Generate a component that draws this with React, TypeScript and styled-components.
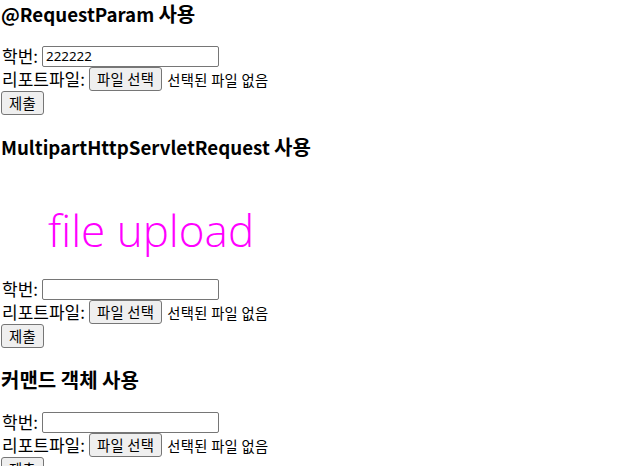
import styled, { createGlobalStyle } from "styled-components";

const GlobalStyle = createGlobalStyle`
  body {
    margin: 0;
    background: #ffffff;
    color: #000000;
    font-family: "Noto Sans CJK KR", "Noto Sans", sans-serif;
    font-size: 16px;
  }
`;

const Page = styled.div`
  padding: 1px 0 0 1px;
`;

const Heading = styled.h3`
  margin: 19px 0;
  font-size: 18.72px;
  font-weight: bold;
  line-height: 25px;
  font-family: "Noto Sans CJK KR", "Noto Sans", sans-serif;
  &:first-child {
    margin-top: 0;
  }
`;

// Hangul in Noto CJK runs a bit smaller than in the reference font
const Ko = styled.span`
  font-size: 20px;
`;

const Row = styled.div<{ $h: number }>`
  display: flex;
  align-items: center;
  height: ${(p) => p.$h}px;
`;

const Label = styled.span`
  padding-left: 1px;
  margin-right: 4px;
  font-size: 17px;
  line-height: 20px;
`;

const TextInput = styled.input`
  box-sizing: border-box;
  width: 177px;
  height: 21px;
  padding: 1px 3px;
  border: 1px solid #767676;
  border-radius: 2px;
  font-family: "Noto Sans", "Noto Sans CJK KR", sans-serif;
  font-size: 13.33px;
  color: #000;
  background: #fff;
  outline: none;
`;

const Button = styled.button`
  box-sizing: border-box;
  height: 24px;
  padding: 0 7px;
  border: 1px solid #767676;
  border-radius: 3px;
  background: #efefef;
  color: #000;
  font-family: "Noto Sans CJK KR", sans-serif;
  font-size: 14.3px;
  line-height: 20px;
  letter-spacing: 0.3px;
`;

const Status = styled.span`
  margin-left: 5px;
  font-size: 14.3px;
  letter-spacing: 0.3px;
`;

const Banner = styled.div`
  box-sizing: border-box;
  height: 100px;
  padding: 22px 0 0 47px;
  color: #ff00ff;
  font-family: "Open Sans", "Noto Sans", sans-serif;
  font-weight: 300;
  font-size: 44px;
  line-height: 60px;
`;

type FormProps = { value?: string };

const UploadForm = ({ value = "" }: FormProps) => (
  <form onSubmit={(e) => e.preventDefault()}>
    <Row $h={22}>
      <Label>학번:</Label>
      <TextInput defaultValue={value} />
    </Row>
    <Row $h={24}>
      <Label>리포트파일:</Label>
      <Button type="button">파일 선택</Button>
      <Status>선택된 파일 없음</Status>
    </Row>
    <Row $h={24}>
      <Button type="submit">제출</Button>
    </Row>
  </form>
);

export default function App() {
  return (
    <Page>
      <GlobalStyle />
      <Heading>
        @RequestParam <Ko>사용</Ko>
      </Heading>
      <UploadForm value="222222" />
      <Heading>
        MultipartHttpServletRequest <Ko>사용</Ko>
      </Heading>
      <Banner>file upload</Banner>
      <UploadForm />
      <Heading>
        <Ko>커맨드 객체 사용</Ko>
      </Heading>
      <UploadForm />
    </Page>
  );
}
